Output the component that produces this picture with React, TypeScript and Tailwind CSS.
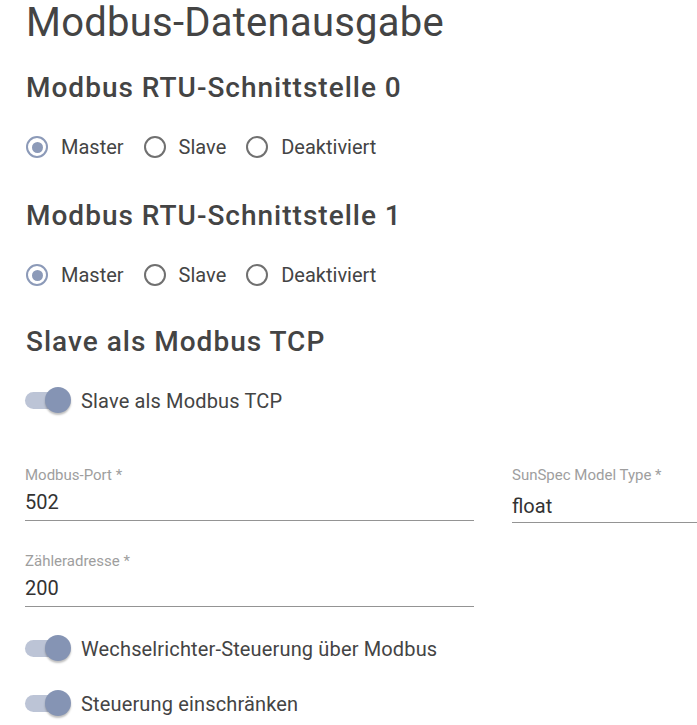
import React from "react";

const font = { fontFamily: "Roboto, 'Noto Sans', sans-serif" };

function Radio({ checked, label }: { checked?: boolean; label: string }) {
  return (
    <div className="flex items-center">
      <span
        className={
          "flex h-[22px] w-[22px] items-center justify-center rounded-full border-2 " +
          (checked ? "border-[#8c9ab8]" : "border-[#707070]")
        }
      >
        {checked && <span className="h-[11px] w-[11px] rounded-full bg-[#8c9ab8]" />}
      </span>
      <span className="ml-[13px] text-[20px] leading-[24px] text-[#444]">{label}</span>
    </div>
  );
}

function RadioRow() {
  return (
    <div className="flex h-[24px] items-center gap-[20px] pl-[1px]">
      <Radio checked label="Master" />
      <Radio label="Slave" />
      <Radio label="Deaktiviert" />
    </div>
  );
}

function Toggle({ label }: { label: string }) {
  return (
    <div className="flex h-[40px] items-center">
      <div className="relative h-[40px] w-[46px] shrink-0">
        <div className="absolute left-0 top-[12px] h-[17px] w-[41px] rounded-full bg-[#bcc4d6]" />
        <div className="absolute left-[20px] top-[7px] h-[26px] w-[26px] rounded-full bg-[#8594b4] shadow-[0_2px_2px_rgba(0,0,0,0.25)]" />
      </div>
      <span className="ml-[10px] pt-[1px] text-[20px] leading-[24px] tracking-[0.15px] text-[#444]">{label}</span>
    </div>
  );
}

export default function App() {
  return (
    <div className="w-[697px] h-[725px] overflow-hidden bg-white pl-[25px]" style={font}>
      <h1 className="h-[46px] text-[40px] leading-[46px] font-normal tracking-[0.25px] text-[#444] pl-[1px]">
        Modbus-Datenausgabe
      </h1>
      <h2 className="mt-[25px] h-[34px] text-[28px] leading-[34px] font-medium tracking-[1px] text-[#444] pl-[1px]">
        Modbus RTU-Schnittstelle 0
      </h2>
      <div className="mt-[30px]">
        <RadioRow />
      </div>
      <h2 className="mt-[40px] h-[34px] text-[28px] leading-[34px] font-medium tracking-[1px] text-[#444] pl-[1px]">
        Modbus RTU-Schnittstelle 1
      </h2>
      <div className="mt-[30px]">
        <RadioRow />
      </div>
      <h2 className="mt-[38px] h-[34px] text-[28px] leading-[34px] font-medium tracking-[1px] text-[#444] pl-[1px]">
        Slave als Modbus TCP
      </h2>
      <div className="mt-[21px]">
        <Toggle label="Slave als Modbus TCP" />
      </div>
      <div className="mt-[46px] flex gap-[38px]">
        <div className="flex w-[449px] shrink-0 flex-col">
          <div className="h-[18px] text-[15px] leading-[18px] text-[#9e9e9e]">Modbus-Port *</div>
          <div className="mt-[4px] h-[33px] border-b border-[#949494] text-[20px] leading-[28px] text-[#333]">
            502
          </div>
        </div>
        <div className="flex w-[200px] shrink-0 flex-col">
          <div className="h-[18px] text-[15px] leading-[18px] text-[#9e9e9e]">SunSpec Model Type *</div>
          <div className="mt-[4px] h-[35px] border-b border-[#949494] text-[20px] leading-[36px] text-[#333]">
            float
          </div>
        </div>
      </div>
      <div className="mt-[29px] flex w-[449px] flex-col">
        <div className="h-[18px] text-[15px] leading-[18px] text-[#9e9e9e]">Zähleradresse *</div>
        <div className="mt-[4px] h-[33px] border-b border-[#949494] text-[20px] leading-[28px] text-[#333]">
          200
        </div>
      </div>
      <div className="mt-[21px]">
        <Toggle label="Wechselrichter-Steuerung über Modbus" />
      </div>
      <div className="mt-[15px]">
        <Toggle label="Steuerung einschränken" />
      </div>
    </div>
  );
}
